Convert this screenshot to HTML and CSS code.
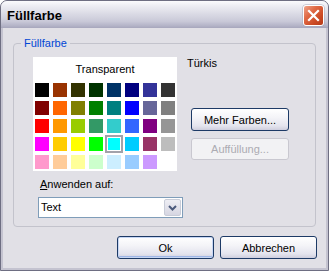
FILE: index.html
```html
<!DOCTYPE html>
<html lang="de">
<head>
<meta charset="utf-8">
<link rel="stylesheet" href="styles.css">
</head>
<body>
<div class="window">
  <div class="titlebar">
    <span class="title">Füllfarbe</span>
    <button class="close" aria-label="Schließen">
      <svg width="13" height="13" viewBox="0 0 13 13"><path d="M2 2 L11 11 M11 2 L2 11" stroke="#fff" stroke-width="2.2" stroke-linecap="square" fill="none"/></svg>
    </button>
  </div>
  <div class="client">
    <div class="group">
      <span class="legend">Füllfarbe</span>
      <div class="group-body">
        <div class="left-col">
          <div class="palette">
            <div class="transparent">Transparent</div>
            <div class="grid">
              <span class="sw" style="background:#000000"></span>
              <span class="sw" style="background:#993300"></span>
              <span class="sw" style="background:#333300"></span>
              <span class="sw" style="background:#003300"></span>
              <span class="sw" style="background:#003366"></span>
              <span class="sw" style="background:#000080"></span>
              <span class="sw" style="background:#333399"></span>
              <span class="sw" style="background:#333333"></span>

              <span class="sw" style="background:#800000"></span>
              <span class="sw" style="background:#FF6600"></span>
              <span class="sw" style="background:#808000"></span>
              <span class="sw" style="background:#008000"></span>
              <span class="sw" style="background:#008080"></span>
              <span class="sw" style="background:#0000FF"></span>
              <span class="sw" style="background:#666699"></span>
              <span class="sw" style="background:#808080"></span>

              <span class="sw" style="background:#FF0000"></span>
              <span class="sw" style="background:#FF9900"></span>
              <span class="sw" style="background:#99CC00"></span>
              <span class="sw" style="background:#339966"></span>
              <span class="sw" style="background:#33CCCC"></span>
              <span class="sw" style="background:#3366FF"></span>
              <span class="sw" style="background:#800080"></span>
              <span class="sw" style="background:#969696"></span>

              <span class="sw" style="background:#FF00FF"></span>
              <span class="sw" style="background:#FFCC00"></span>
              <span class="sw" style="background:#FFFF00"></span>
              <span class="sw" style="background:#00FF00"></span>
              <span class="sw selected" style="background:#00FFFF"></span>
              <span class="sw" style="background:#00CCFF"></span>
              <span class="sw" style="background:#993366"></span>
              <span class="sw" style="background:#BDBDBD"></span>

              <span class="sw" style="background:#FF99CC"></span>
              <span class="sw" style="background:#FFCC99"></span>
              <span class="sw" style="background:#FFFF99"></span>
              <span class="sw" style="background:#CCFFCC"></span>
              <span class="sw" style="background:#CCEEFF"></span>
              <span class="sw" style="background:#99CCFF"></span>
              <span class="sw" style="background:#CC99FF"></span>
              <span class="sw empty"></span>
            </div>
          </div>
          <div class="apply-label"><u>A</u>nwenden auf:</div>
          <div class="select">
            <span class="select-text">Text</span>
            <span class="select-btn">
              <svg width="9" height="6" viewBox="0 0 9 6"><path d="M1 1 L4.5 4.5 L8 1" stroke="#4B5A7C" stroke-width="2" fill="none"/></svg>
            </span>
          </div>
        </div>
        <div class="right-col">
          <div class="color-name">Türkis</div>
          <button class="btn more">Mehr Farben...</button>
          <button class="btn disabled">Auffüllung...</button>
        </div>
      </div>
    </div>
    <div class="actions">
      <button class="btn dlg default">Ok</button>
      <button class="btn dlg">Abbrechen</button>
    </div>
  </div>
</div>
</body>
</html>
```

FILE: styles.css
```css
* { box-sizing: border-box; }
html, body { margin: 0; padding: 0; }
body {
  width: 329px;
  height: 271px;
  background: #ffffff;
  font-family: "Liberation Sans", Arial, sans-serif;
  font-size: 11px;
  color: #000;
}
.window {
  width: 329px;
  height: 271px;
  border: 1px solid #6E6E82;
  border-radius: 7px 7px 0 0;
  background: #C4C3D0;
  display: flex;
  flex-direction: column;
  overflow: hidden;
}
.titlebar {
  height: 27px;
  flex: none;
  display: flex;
  align-items: flex-start;
  justify-content: space-between;
  padding-left: 6px;
  padding-right: 4px;
  background: linear-gradient(#FBFBFD 0%, #EDEDF3 18%, #DCDCE6 45%, #C9C9D8 75%, #B3B3C7 92%, #A6A6BC 100%);
}
.title {
  font-weight: bold;
  font-size: 13px;
  line-height: 16px;
  margin-top: 7px;
  color: #000;
}
.close {
  width: 21px;
  height: 21px;
  margin-top: 4px;
  padding: 0;
  border: 1px solid #FFFFFF;
  border-radius: 3px;
  background: linear-gradient(135deg, #F0A48A 0%, #E06A46 35%, #CC4A24 70%, #B53A18 100%);
  display: flex;
  align-items: center;
  justify-content: center;
  box-shadow: 0 0 0 0.5px #A8A8B8;
}
.client {
  flex: 1;
  margin: 0 2px 2px;
  background: #E1E0E6;
  display: flex;
  flex-direction: column;
}
.group {
  position: relative;
  margin: 15px 0 0 10px;
  width: 303px;
  height: 184px;
  border: 1px solid #C3C3CC;
  border-radius: 4px;
}
.legend {
  position: absolute;
  left: 7px;
  top: -8px;
  padding: 0 3px;
  background: #E1E0E6;
  color: #0046D5;
  line-height: 14px;
}
.group-body {
  display: flex;
  padding: 13px 0 0 19px;
  gap: 4px;
}
.left-col {
  width: 150px;
  display: flex;
  flex-direction: column;
}
.palette {
  width: 144px;
  height: 114px;
  background: #FFFFFF;
}
.transparent {
  height: 24px;
  line-height: 24px;
  text-align: center;
  font-size: 11px;
}
.grid {
  display: grid;
  grid-template-columns: repeat(8, 18px);
  grid-auto-rows: 18px;
}
.sw {
  display: block;
  margin: 2px;
  width: 14px;
  height: 14px;
}
.sw.empty { background: #FFFFFF; }
.sw.selected {
  margin: 0;
  width: 18px;
  height: 18px;
  border: 2px solid #A2A2AA;
  box-shadow: inset 0 0 0 1px #FFFFFF;
}
.apply-label {
  margin: 7px 0 0 7px;
  line-height: 13px;
}
.apply-label u { text-decoration: underline; }
.select {
  margin: 6px 0 0 5px;
  width: 145px;
  height: 21px;
  border: 1px solid #7F9DB9;
  background: #FFFFFF;
  display: flex;
  align-items: stretch;
}
.select-text {
  flex: 1;
  padding-left: 2px;
  line-height: 19px;
}
.select-btn {
  width: 17px;
  margin: 1px;
  border: 1px solid #C8CCD8;
  border-radius: 2px;
  background: linear-gradient(#EEEEF4, #D6D6E2);
  display: flex;
  align-items: center;
  justify-content: center;
}
.right-col {
  display: flex;
  flex-direction: column;
  align-items: flex-start;
}
.color-name {
  line-height: 13px;
}
.btn {
  font-family: "Liberation Sans", Arial, sans-serif;
  font-size: 11px;
  width: 98px;
  height: 23px;
  padding: 0;
  border: 1px solid #1D3A66;
  border-radius: 3px;
  background: linear-gradient(#FFFFFF 0%, #F4F4F8 40%, #E4E4EE 80%, #CFCFDD 100%);
  color: #000;
  box-shadow: inset 0 -1px 0 #D0D0E0;
}
.btn.more {
  margin: 38px 0 0 4px;
}
.btn.disabled {
  margin: 7px 0 0 4px;
  height: 22px;
  border-color: #C9C8D0;
  background: #F2F2F4;
  color: #ACABB2;
  box-shadow: none;
}
.actions {
  display: flex;
  justify-content: flex-end;
  gap: 6px;
  margin-top: 9px;
  padding-right: 9px;
}
.btn.dlg {
  width: 97px;
}
.btn.default {
  box-shadow: inset 0 0 0 1px #C6D6F4, inset 0 -2px 0 #9FB6E6;
}
```
